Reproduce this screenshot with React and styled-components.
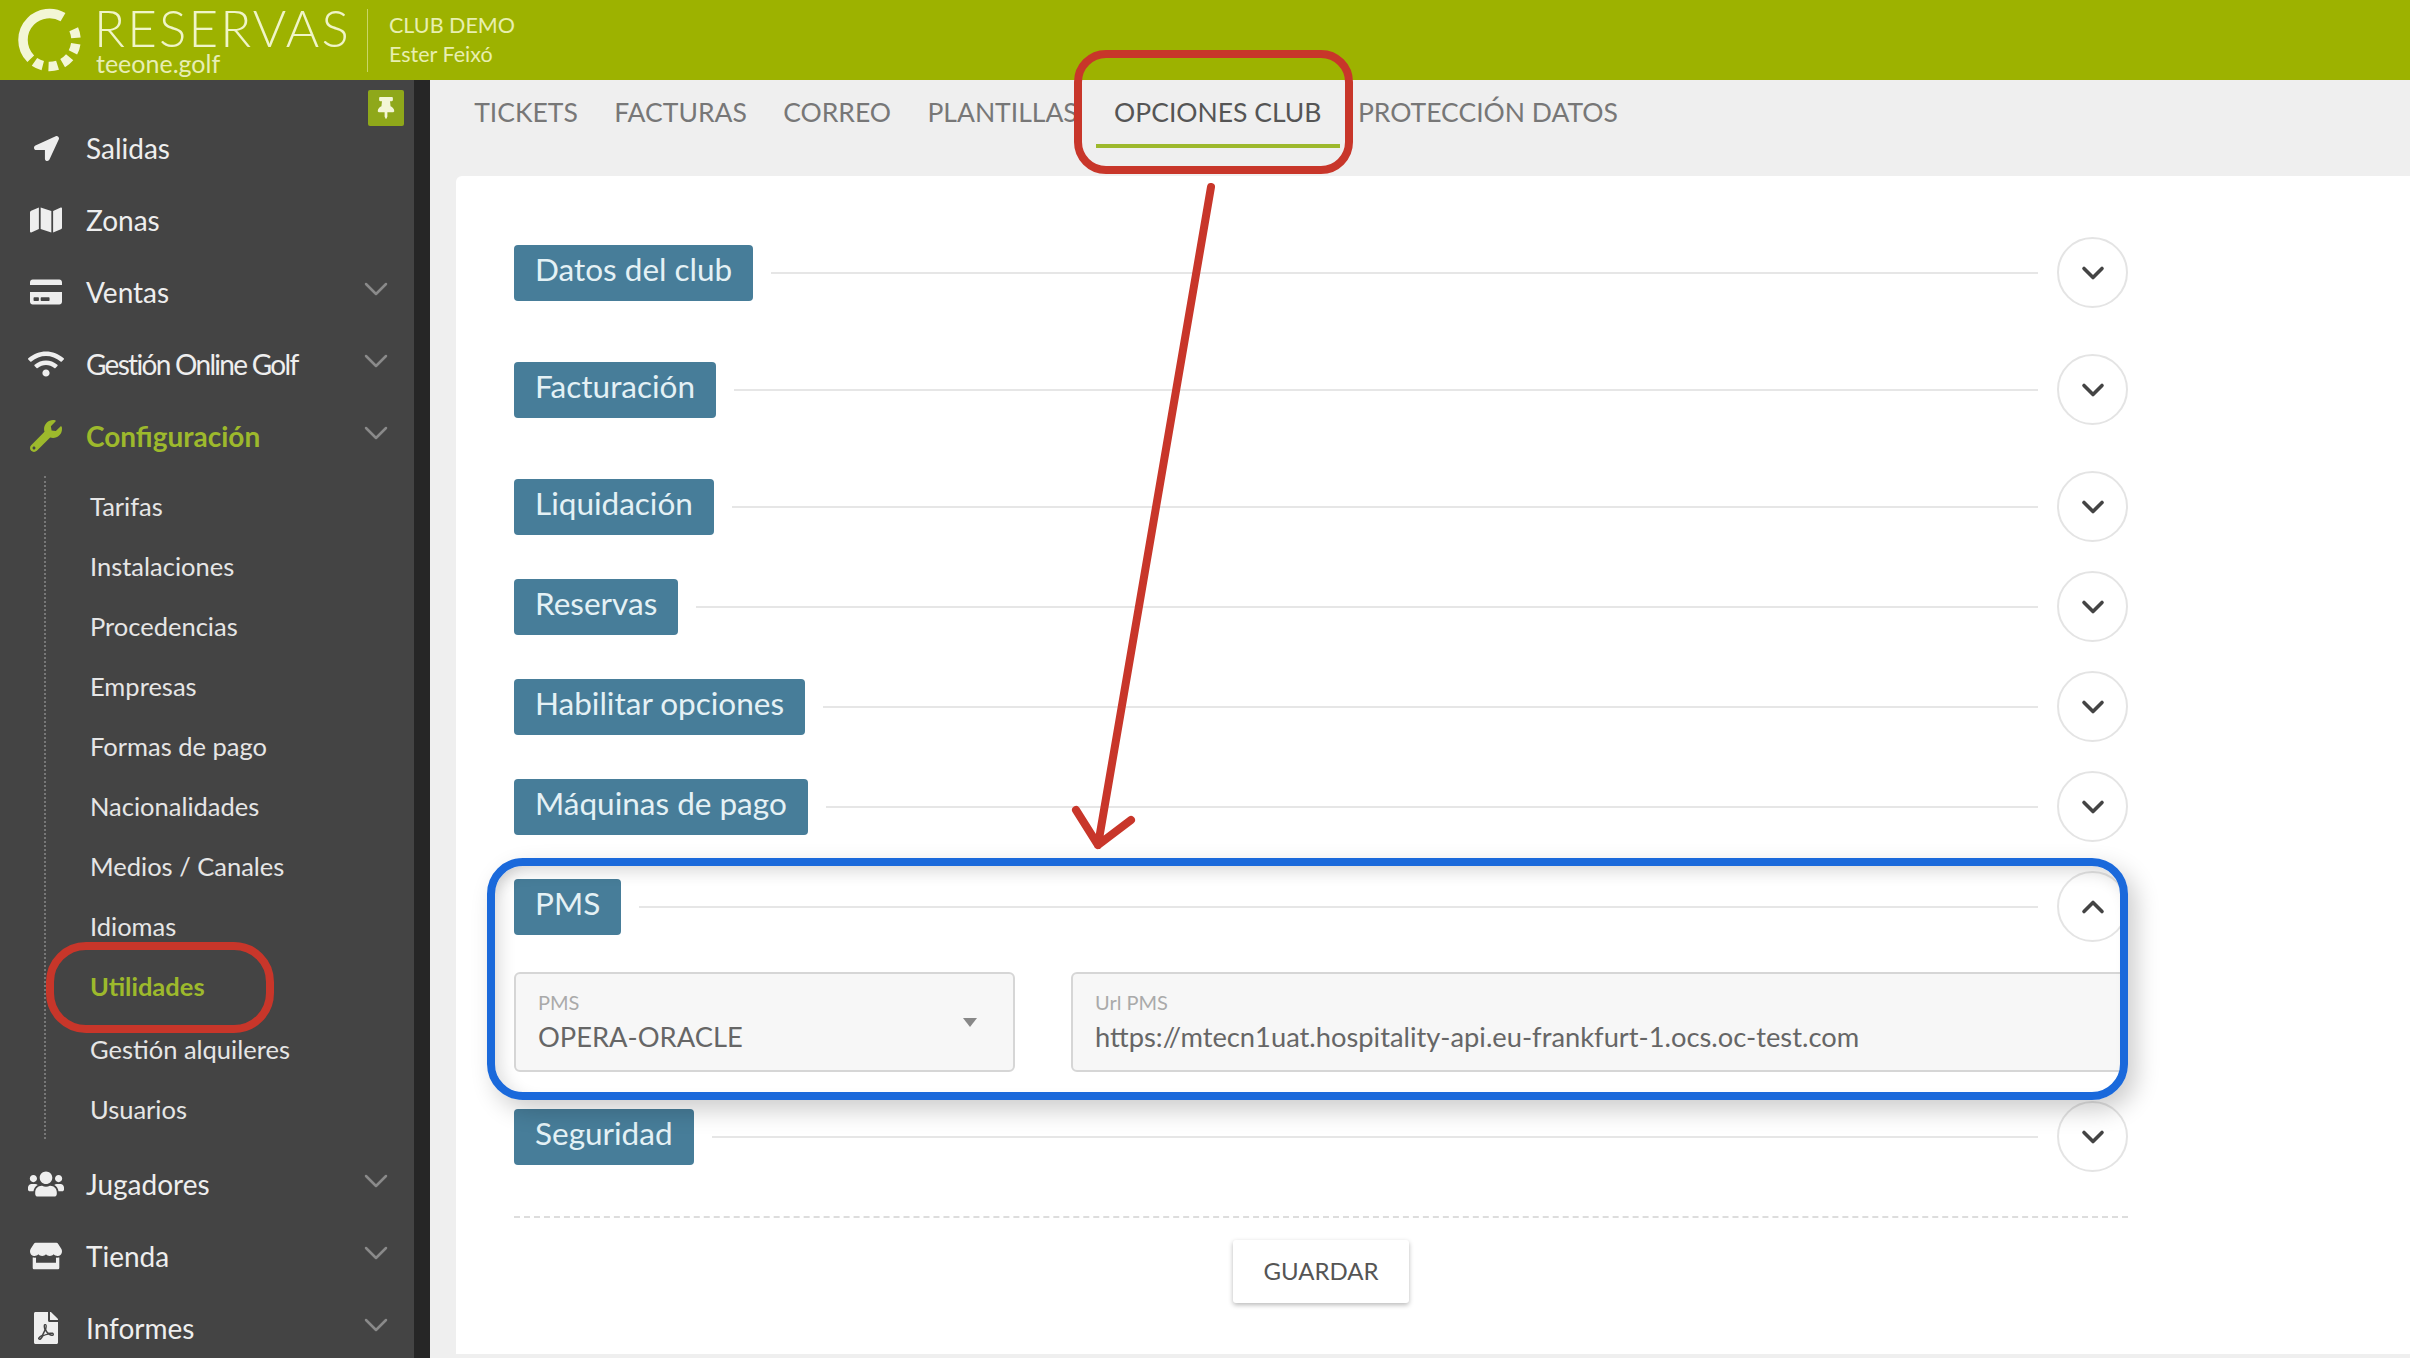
import React from "react";
import styled, { createGlobalStyle } from "styled-components";
import {
  FaLocationArrow,
  FaMap,
  FaCreditCard,
  FaWifi,
  FaWrench,
  FaUsers,
  FaStore,
  FaFilePdf,
  FaThumbtack,
} from "react-icons/fa";
import { FiChevronDown, FiChevronUp } from "react-icons/fi";

const GlobalStyle = createGlobalStyle`
  html, body {
    margin: 0;
    height: 100%;
    overflow: hidden;
    background: #efefef;
    font-family: "Lato", "Open Sans", sans-serif;
  }
  * { box-sizing: border-box; }
`;

const topItems = [
  { label: "Salidas", icon: FaLocationArrow, size: 25 },
  { label: "Zonas", icon: FaMap },
  { label: "Ventas", icon: FaCreditCard, arrow: true },
  { label: "Gestión Online Golf", icon: FaWifi, size: 36, arrow: true, tight: true },
  { label: "Configuración", icon: FaWrench, arrow: true, active: true },
];

const subItems = [
  "Tarifas",
  "Instalaciones",
  "Procedencias",
  "Empresas",
  "Formas de pago",
  "Nacionalidades",
  "Medios / Canales",
  "Idiomas",
  "Utilidades",
  "Gestión alquileres",
  "Usuarios",
];

const bottomItems = [
  { label: "Jugadores", icon: FaUsers, size: 36, arrow: true },
  { label: "Tienda", icon: FaStore, arrow: true },
  { label: "Informes", icon: FaFilePdf, arrow: true },
];

const tabs = ["TICKETS", "FACTURAS", "CORREO", "PLANTILLAS", "OPCIONES CLUB", "PROTECCIÓN DATOS"];

const sections = [
  { title: "Datos del club", after: 46 },
  { title: "Facturación", after: 46 },
  { title: "Liquidación", after: 29 },
  { title: "Reservas", after: 29 },
  { title: "Habilitar opciones", after: 29 },
  { title: "Máquinas de pago", after: 29 },
  { title: "PMS", open: true },
  { title: "Seguridad" },
];

const NavRow = ({ item }) => {
  const Icon = item.icon;
  return (
    <NavItem $active={item.active}>
      <NavIcon $size={item.size}>
        <Icon />
      </NavIcon>
      <NavLabel $tight={item.tight}>{item.label}</NavLabel>
      {item.arrow && (
        <NavArrow>
          <FiChevronDown strokeWidth={1.5} />
        </NavArrow>
      )}
    </NavItem>
  );
};

const App = () => {
  return (
    <Page>
      <GlobalStyle />
      <Header>
        <Logo viewBox="0 0 100 82">
          <circle
            cx="49.5"
            cy="41"
            r="26.5"
            fill="none"
            stroke="#f3f6d6"
            strokeWidth="9.5"
            strokeDasharray="76 200"
            transform="rotate(135 49.5 41)"
          />
          <circle
            cx="49.5"
            cy="41"
            r="26.5"
            fill="none"
            stroke="#f3f6d6"
            strokeWidth="9.5"
            strokeDasharray="9 5.8 9 5.8 9 5.8 9 5.8 9 200"
            transform="rotate(-24 49.5 41)"
          />
        </Logo>
        <Brand>
          <BrandName>RESERVAS</BrandName>
          <BrandSub>teeone.golf</BrandSub>
        </Brand>
        <HeaderDivider />
        <ClubInfo>
          <span>CLUB DEMO</span>
          <span>Ester Feixó</span>
        </ClubInfo>
      </Header>
      <Body>
        <Sidebar>
          <PinButton>
            <FaThumbtack />
          </PinButton>
          {topItems.map((item) => (
            <NavRow key={item.label} item={item} />
          ))}
          <SubList>
            {subItems.map((label) => (
              <SubItem
                key={label}
                $active={label === "Utilidades"}
                $pushed={label === "Gestión alquileres"}
              >
                {label}
              </SubItem>
            ))}
          </SubList>
          {bottomItems.map((item) => (
            <NavRow key={item.label} item={item} />
          ))}
        </Sidebar>
        <Main>
          <TabBar>
            {tabs.map((tab) => (
              <Tab key={tab} $active={tab === "OPCIONES CLUB"}>
                {tab}
              </Tab>
            ))}
          </TabBar>
          <Card>
            {sections.map((section) => (
              <Section key={section.title} $after={section.after}>
                <SectionRow>
                  <Badge>{section.title}</Badge>
                  <SectionLine />
                  <RoundButton>
                    {section.open ? <FiChevronUp strokeWidth={2.4} /> : <FiChevronDown strokeWidth={2.4} />}
                  </RoundButton>
                </SectionRow>
                {section.open && (
                  <Fields>
                    <Field $width="501px">
                      <FieldLabel>PMS</FieldLabel>
                      <FieldValue>OPERA-ORACLE</FieldValue>
                      <SelectCaret />
                    </Field>
                    <Field>
                      <FieldLabel>Url PMS</FieldLabel>
                      <FieldValue>https://mtecn1uat.hospitality-api.eu-frankfurt-1.ocs.oc-test.com</FieldValue>
                    </Field>
                  </Fields>
                )}
              </Section>
            ))}
            <DottedRule />
            <Actions>
              <SaveButton>GUARDAR</SaveButton>
            </Actions>
          </Card>
        </Main>
      </Body>

      {/* marcas de la captura, encima de la pantalla */}
      <BlueFrame />
      <RedFrame $left={1074} $top={50} $width={279} $height={124} $radius={32} />
      <RedFrame $left={46} $top={942} $width={228} $height={91} $radius={40} />
      <ArrowLayer viewBox="0 0 2410 1358">
        <path
          d="M1211 187 L1098 845 M1076 810 L1098 845 L1131 820"
          fill="none"
          stroke="#c8362a"
          strokeWidth="8"
          strokeLinecap="round"
          strokeLinejoin="round"
        />
      </ArrowLayer>
    </Page>
  );
};

export default App;

const Page = styled.div`
  position: relative;
  width: 2410px;
  height: 1358px;
  overflow: hidden;
  display: flex;
  flex-direction: column;
`;

const Header = styled.header`
  height: 80px;
  flex-shrink: 0;
  display: flex;
  align-items: center;
  background: #9db200;
  overflow: hidden;
`;

const Logo = styled.svg`
  width: 100px;
  height: 82px;
  flex-shrink: 0;
  margin-right: -6px;
`;

const Brand = styled.div`
  width: 273px;
  height: 80px;
  display: flex;
  flex-direction: column;
  padding-top: 5px;
  color: #f0f5c8;
`;

const BrandName = styled.div`
  font-size: 51px;
  font-weight: 300;
  line-height: 46px;
  letter-spacing: 2.2px;
`;

const BrandSub = styled.div`
  font-size: 25px;
  line-height: 24px;
  margin-left: 2px;
  opacity: 0.9;
`;

const HeaderDivider = styled.div`
  width: 1px;
  height: 63px;
  background: #c9d666;
`;

const ClubInfo = styled.div`
  margin-left: 21px;
  margin-top: -2px;
  display: flex;
  flex-direction: column;
  gap: 5px;
  color: #e8efb0;
  font-size: 21.5px;
  line-height: 24px;
`;

const Body = styled.div`
  flex: 1;
  display: flex;
  min-height: 0;
`;

const Sidebar = styled.nav`
  position: relative;
  width: 430px;
  flex-shrink: 0;
  padding-top: 32px;
  background: #444444;
  border-right: 16px solid #262626;
`;

const PinButton = styled.div`
  position: absolute;
  top: 10px;
  right: 10px;
  width: 36px;
  height: 36px;
  display: flex;
  align-items: center;
  justify-content: center;
  border-radius: 2px;
  background: #8fa81a;
  color: #f3f6d6;
  font-size: 22px;
`;

const NavItem = styled.div`
  height: 72px;
  display: flex;
  align-items: center;
  padding: 0 24px;
  color: ${(props) => (props.$active ? "#9db92c" : "#eeeeee")};
  font-weight: ${(props) => (props.$active ? 700 : 400)};
`;

const NavIcon = styled.span`
  width: 44px;
  margin-right: 18px;
  display: flex;
  justify-content: center;
  font-size: ${(props) => props.$size || 32}px;
`;

const NavLabel = styled.span`
  flex: 1;
  font-size: 28px;
  letter-spacing: ${(props) => (props.$tight ? "-1.7px" : "normal")};
`;

const NavArrow = styled.span`
  display: flex;
  margin-bottom: 6px;
  margin-right: -6px;
  font-size: 40px;
  color: #8a8a8a;
`;

const SubList = styled.ul`
  list-style: none;
  margin: 4px 0 9px 44px;
  padding: 0 0 0 44px;
  border-left: 2px dotted #777777;
`;

const SubItem = styled.li`
  height: 60px;
  display: flex;
  align-items: center;
  margin-top: ${(props) => (props.$pushed ? "3px" : 0)};
  font-size: 25.5px;
  font-weight: ${(props) => (props.$active ? 700 : 400)};
  color: ${(props) => (props.$active ? "#9db92c" : "#e6e6e6")};
`;

const Main = styled.main`
  flex: 1;
  min-width: 0;
  display: flex;
  flex-direction: column;
  padding-left: 26px;
  padding-bottom: 4px;
  background: #efefef;
`;

const TabBar = styled.div`
  height: 96px;
  flex-shrink: 0;
  display: flex;
  padding-top: 14px;
`;

const Tab = styled.div`
  height: 54px;
  padding: 0 18.2px 14px;
  display: flex;
  align-items: center;
  white-space: nowrap;
  font-size: 26.5px;
  color: ${(props) => (props.$active ? "#555555" : "#777777")};
  border-bottom: 4px solid ${(props) => (props.$active ? "#9db92c" : "transparent")};
`;

const Card = styled.section`
  flex: 1;
  min-height: 0;
  padding: 61px 0 0 58px;
  background: #ffffff;
  border-top-left-radius: 6px;
`;

const Section = styled.div`
  width: 1614px;
  margin-bottom: ${(props) => props.$after || 0}px;
`;

const SectionRow = styled.div`
  height: 71px;
  display: flex;
  align-items: center;
`;

const Badge = styled.div`
  height: 56px;
  padding: 0 21px 8px;
  display: flex;
  align-items: center;
  border-radius: 4px;
  background: #477d99;
  color: #e4f1f5;
  font-size: 31.5px;
  white-space: nowrap;
`;

const SectionLine = styled.div`
  flex: 1;
  height: 2px;
  margin: 0 19px 0 18px;
  background: #e6e6e6;
`;

const RoundButton = styled.div`
  width: 71px;
  height: 71px;
  flex-shrink: 0;
  display: flex;
  align-items: center;
  justify-content: center;
  border: 2px solid #e4e4e4;
  border-radius: 50%;
  background: #ffffff;
  color: #444444;
  font-size: 36px;
`;

const Fields = styled.div`
  display: flex;
  gap: 56px;
  margin: 30px 0 29px;
`;

const Field = styled.div`
  position: relative;
  ${(props) => (props.$width ? `width: ${props.$width};` : "flex: 1;")}
  height: 100px;
  padding: 14px 22px 0;
  border: 2px solid #d6d6d6;
  border-radius: 6px;
  background: #f7f7f7;
`;

const FieldLabel = styled.div`
  font-size: 20px;
  line-height: 28px;
  color: #aaaaaa;
`;

const FieldValue = styled.div`
  margin-top: 6px;
  font-size: 27.3px;
  line-height: 30px;
  color: #666666;
  white-space: nowrap;
`;

const SelectCaret = styled.span`
  position: absolute;
  top: 44px;
  right: 36px;
  border-left: 7px solid transparent;
  border-right: 7px solid transparent;
  border-top: 9px solid #888888;
`;

const DottedRule = styled.div`
  width: 1614px;
  margin-top: 44px;
  border-top: 2px dashed #dddddd;
`;

const Actions = styled.div`
  width: 1614px;
  margin-top: 22px;
  display: flex;
  justify-content: center;
`;

const SaveButton = styled.button`
  width: 176px;
  height: 63px;
  padding-bottom: 3px;
  border: 0;
  border-radius: 3px;
  background: #ffffff;
  box-shadow: 0 2px 5px rgba(0, 0, 0, 0.28);
  color: #555555;
  font-family: inherit;
  font-size: 24px;
`;

const BlueFrame = styled.div`
  position: absolute;
  left: 487px;
  top: 858px;
  width: 1641px;
  height: 242px;
  border: 8px solid #1a69db;
  border-radius: 36px;
  box-shadow:
    8px 10px 24px rgba(0, 0, 0, 0.2),
    inset 0 16px 16px -10px rgba(0, 0, 0, 0.14),
    inset 16px 0 16px -10px rgba(0, 0, 0, 0.12);
`;

const RedFrame = styled.div`
  position: absolute;
  left: ${(props) => props.$left}px;
  top: ${(props) => props.$top}px;
  width: ${(props) => props.$width}px;
  height: ${(props) => props.$height}px;
  border: 8px solid #c8362a;
  border-radius: ${(props) => props.$radius}px;
`;

const ArrowLayer = styled.svg`
  position: absolute;
  inset: 0;
  width: 2410px;
  height: 1358px;
  pointer-events: none;
`;
